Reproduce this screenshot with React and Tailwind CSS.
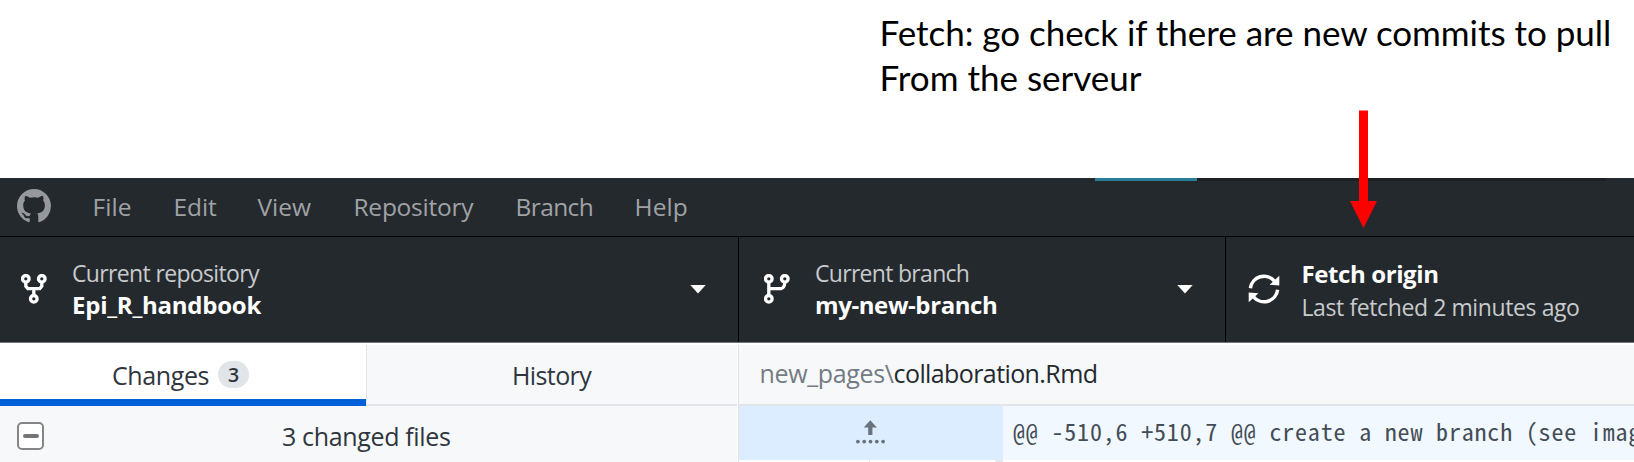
import React from "react";

const MENU = [
  { label: "File", cls: "w-[81px] tracking-[0.1px]" },
  { label: "Edit", cls: "w-[84px] tracking-[-0.1px]" },
  { label: "View", cls: "w-[96px]" },
  { label: "Repository", cls: "w-[162px] tracking-[-0.25px]" },
  { label: "Branch", cls: "w-[119px] tracking-[-0.6px]" },
  { label: "Help", cls: "tracking-[0.1px]" },
];

function GitHubMark() {
  return (
    <svg viewBox="0 0 16 16" className="mt-[11px] h-[34px] w-[34px] shrink-0 fill-[#96989b]">
      <path d="M8 0C3.58 0 0 3.58 0 8c0 3.54 2.29 6.53 5.47 7.59.4.07.55-.17.55-.38 0-.19-.01-.82-.01-1.49-2.01.37-2.53-.49-2.69-.94-.09-.23-.48-.94-.82-1.13-.28-.15-.68-.52-.01-.53.63-.01 1.08.58 1.23.82.72 1.21 1.87.87 2.33.66.07-.52.28-.87.51-1.07-1.78-.2-3.64-.89-3.64-3.95 0-.87.31-1.59.82-2.15-.08-.2-.36-1.02.08-2.12 0 0 .67-.21 2.2.82.64-.18 1.32-.27 2-.27s1.36.09 2 .27c1.53-1.04 2.2-.82 2.2-.82.44 1.1.16 1.92.08 2.12.51.56.82 1.27.82 2.15 0 3.07-1.87 3.75-3.65 3.95.29.25.54.73.54 1.48 0 1.07-.01 1.93-.01 2.2 0 .21.15.46.55.38A8.01 8.01 0 0 0 16 8c0-4.42-3.58-8-8-8z" />
    </svg>
  );
}

function ForkIcon() {
  return (
    <svg viewBox="0 0 26 30" className="mt-[37px] h-[30px] w-[26px] shrink-0" fill="none" stroke="#fff" strokeWidth="3.3">
      <circle cx="4.8" cy="4.8" r="3.3" />
      <circle cx="20.8" cy="4.8" r="3.3" />
      <circle cx="12.8" cy="24.8" r="3.3" />
      <path d="M4.8 8.5v3.7l2 2.4h12l2-2.4V8.5M12.8 14.6v7" />
    </svg>
  );
}

function BranchIcon() {
  return (
    <svg viewBox="0 0 26 30" className="mt-[37px] h-[30px] w-[26px] shrink-0" fill="none" stroke="#fff" strokeWidth="3.3">
      <circle cx="4.8" cy="4.8" r="3.3" />
      <circle cx="20.8" cy="4.8" r="3.3" />
      <circle cx="4.8" cy="24.8" r="3.3" />
      <path d="M4.8 8v14M4.8 14.6H17q3.4-.6 3.8-6.1" />
    </svg>
  );
}

function SyncIcon() {
  return (
    <svg viewBox="0 0 32 32" className="mt-[36px] h-[32px] w-[32px] shrink-0" fill="none" stroke="#fff" strokeWidth="3.5">
      <path d="M2.4 15.2A13.6 13.6 0 0 1 26.4 8.2M29.6 16.8A13.6 13.6 0 0 1 5.6 23.8" />
      <path d="M31.3 2.8V12.6L21.6 11.8zM.7 29.2V19.4L10.4 20.2z" fill="#fff" stroke="none" />
    </svg>
  );
}

function Caret() {
  return (
    <svg viewBox="0 0 16 9" className="mt-[48px] h-[9px] w-[16px] shrink-0 fill-white">
      <path d="M.3 0h15.4L8 8.4z" />
    </svg>
  );
}

export default function App() {
  return (
    <div className="relative flex h-[462px] w-[1634px] flex-col overflow-hidden whitespace-nowrap bg-white font-['Open_Sans',sans-serif]">
      <div className="h-[178px] shrink-0 pl-[879.5px] pt-[10px] font-['Lato',sans-serif] text-[35px] leading-[45px] text-black">
        <p className="tracking-[-0.03px]">Fetch: go check if there are new commits to pull</p>
        <p>From the serveur</p>
      </div>

      <div className="relative flex h-[59px] shrink-0 border-b border-black bg-[#24292e] pl-[17px]">
        <GitHubMark />
        <nav className="ml-[41.5px] mt-[12px] flex text-[24.5px] leading-[34px] text-[#a0a2a5]">
          {MENU.map((m) => (
            <span key={m.label} className={m.cls}>{m.label}</span>
          ))}
        </nav>
        <div className="absolute left-[1095px] top-0 flex h-[3px]">
          <span className="w-[102px] bg-[#2b7c99]" />
          <span className="w-[409px] bg-[#1f2021]" />
        </div>
      </div>

      <div className="flex h-[106px] shrink-0 border-b border-[#70767c] bg-[#24292e] text-[#c8cacc]">
        <div className="flex w-[739px] shrink-0 border-r border-black pl-[21px]">
          <ForkIcon />
          <div className="ml-[24px] w-[619px] pt-[20px]">
            <p className="pl-px text-[23px] leading-[32px] tracking-[-0.65px]">Current repository</p>
            <p className="pl-px text-[24px] font-bold leading-[32px] tracking-[-0.25px] text-white">Epi_R_handbook</p>
          </div>
          <Caret />
        </div>
        <div className="flex w-[487px] shrink-0 border-r border-black pl-[25px]">
          <BranchIcon />
          <div className="ml-[24px] w-[363px] pt-[20px]">
            <p className="pl-px text-[23px] leading-[32px] tracking-[-0.7px]">Current branch</p>
            <p className="pl-px text-[24px] font-bold leading-[32px] tracking-[-0.4px] text-white">my-new-branch</p>
          </div>
          <Caret />
        </div>
        <div className="flex flex-1 pl-[22px]">
          <SyncIcon />
          <div className="ml-[21.5px] pt-[21px]">
            <p className="text-[24px] font-bold leading-[32px] tracking-[-0.4px] text-white">Fetch origin</p>
            <p className="mt-px text-[23px] leading-[32px] tracking-[-0.4px]">Last fetched 2 minutes ago</p>
          </div>
        </div>
      </div>

      <div className="flex min-h-0 flex-1 pt-[2px] text-[25px] leading-[34px] text-[#2f363d]">
        <div className="flex w-[737px] shrink-0 flex-col bg-[#f6f8fa]">
          <div className="flex h-[61px] shrink-0">
            <div className="flex w-[366px] border-b-[7px] border-[#0060d8] bg-white pl-[112px] pt-[13px]">
              <span className="tracking-[-0.4px]">Changes</span>
              <span className="ml-[9px] mt-[3px] flex h-[27px] w-[31px] items-center justify-center rounded-full bg-[#e1e4e8] text-[19.5px] font-semibold leading-[27px]">3</span>
            </div>
            <div className="flex-1 border-b-2 border-l border-[#e1e4e8] pl-[145px] pt-[13px] tracking-[-0.6px]">History</div>
          </div>
          <div className="flex pl-[17px]">
            <span className="mt-[16px] flex h-[28px] w-[27px] items-center justify-center rounded-[5px] border-2 border-[#858585] bg-white">
              <span className="h-[4px] w-[16px] rounded-full bg-[#757575]" />
            </span>
            <span className="ml-[238px] mt-[13px] tracking-[-0.35px]">3 changed files</span>
          </div>
        </div>
        <div className="ml-px flex w-[896px] shrink-0 flex-col border-l border-[#dfe2e6]">
          <div className="h-[61px] shrink-0 border-b-2 border-[#e1e4e8] bg-[#f6f8fa] pl-[20.5px] pt-[11px]">
            <span className="tracking-[-0.35px] text-[#747b83]">new_pages\</span>
            <span className="tracking-[-0.6px] text-[#24292e]">collaboration.Rmd</span>
          </div>
          <div className="flex h-[54px] shrink-0">
            <div className="flex w-[264px] shrink-0 justify-center bg-[#dbedff] pt-[14px]">
              <svg viewBox="0 0 30 24" className="h-[24px] w-[30px] fill-[#6a737d]">
                <path d="M14.3.3 20.9 7.6H16.4V15H12.2V7.6H7.7z" />
                <circle cx="1.9" cy="21.6" r="1.9" />
                <circle cx="8.2" cy="21.6" r="1.9" />
                <circle cx="14.5" cy="21.6" r="1.9" />
                <circle cx="20.8" cy="21.6" r="1.9" />
                <circle cx="27.1" cy="21.6" r="1.9" />
              </svg>
            </div>
            <div className="flex-1 bg-[#f1f8ff] pl-[10px] pt-[7px] font-['Noto_Sans_Mono_CJK_SC','Noto_Sans_CJK_SC',monospace] text-[24px] leading-[36px] tracking-[0.82px] text-[#444d56]">
              @@ -510,6 +510,7 @@ create a new branch (see imag
            </div>
          </div>
          <div className="flex h-[3px] shrink-0">
            <span className="w-[131px] border-r border-[#e1e4e8]" />
            <span className="ml-[125px] w-[8px] bg-[#e6e9ec]" />
          </div>
        </div>
      </div>

      <svg viewBox="0 0 28 118" className="absolute left-[1350px] top-[110px] h-[118px] w-[28px] fill-[#ff0000]">
        <path d="M9 0.5h9V91h9L13.5 118 0 91h9z" />
      </svg>
    </div>
  );
}
